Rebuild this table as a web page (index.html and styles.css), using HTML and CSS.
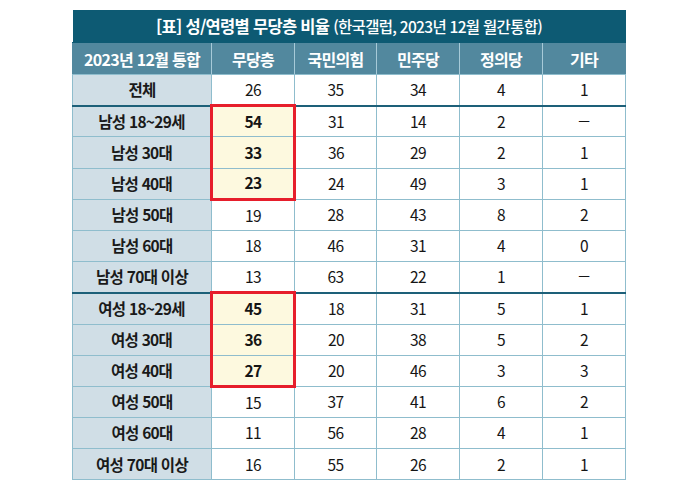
FILE: index.html
```html
<!DOCTYPE html>
<html lang="ko">
<head>
<meta charset="utf-8">
<link rel="stylesheet" href="styles.css">
</head>
<body>
<div class="wrap">
<table class="poll">
  <colgroup>
    <col class="c1"><col class="cn"><col class="cn2"><col class="cn"><col class="cn"><col class="cn">
  </colgroup>
  <thead>
    <tr class="title"><th colspan="6"><b>[표] 성/연령별 무당층 비율</b> <span>(한국갤럽, 2023년 12월 월간통합)</span></th></tr>
    <tr class="head"><th>2023년 12월 통합</th><th>무당층</th><th>국민의힘</th><th>민주당</th><th>정의당</th><th>기타</th></tr>
  </thead>
  <tbody>
    <tr class="sep"><th>전체</th><td>26</td><td>35</td><td>34</td><td>4</td><td>1</td></tr>
    <tr><th>남성 18~29세</th><td class="hl top">54</td><td>31</td><td>14</td><td>2</td><td><span class="dash">—</span></td></tr>
    <tr><th>남성 30대</th><td class="hl">33</td><td>36</td><td>29</td><td>2</td><td>1</td></tr>
    <tr><th>남성 40대</th><td class="hl bot">23</td><td>24</td><td>49</td><td>3</td><td>1</td></tr>
    <tr><th>남성 50대</th><td>19</td><td>28</td><td>43</td><td>8</td><td>2</td></tr>
    <tr><th>남성 60대</th><td>18</td><td>46</td><td>31</td><td>4</td><td>0</td></tr>
    <tr class="sep"><th>남성 70대 이상</th><td>13</td><td>63</td><td>22</td><td>1</td><td><span class="dash">—</span></td></tr>
    <tr><th>여성 18~29세</th><td class="hl top">45</td><td>18</td><td>31</td><td>5</td><td>1</td></tr>
    <tr><th>여성 30대</th><td class="hl">36</td><td>20</td><td>38</td><td>5</td><td>2</td></tr>
    <tr><th>여성 40대</th><td class="hl bot">27</td><td>20</td><td>46</td><td>3</td><td>3</td></tr>
    <tr><th>여성 50대</th><td>15</td><td>37</td><td>41</td><td>6</td><td>2</td></tr>
    <tr><th>여성 60대</th><td>11</td><td>56</td><td>28</td><td>4</td><td>1</td></tr>
    <tr><th>여성 70대 이상</th><td>16</td><td>55</td><td>26</td><td>2</td><td>1</td></tr>
  </tbody>
</table>
</div>
</body>
</html>
```

FILE: styles.css
```css
html, body {
  margin: 0;
  padding: 0;
  background: #ffffff;
}
.wrap {
  padding: 10px 0 0 72px;
}
.poll {
  border-collapse: collapse;
  table-layout: fixed;
  width: 553px;
  font-family: "Noto Sans CJK KR", "Noto Sans", sans-serif;
  color: #151515;
  letter-spacing: -0.7px;
}
.c1 { width: 139px; }
.cn { width: 83px; }
.cn2 { width: 82px; }
.poll th, .poll td {
  padding: 0;
  text-align: center;
  vertical-align: middle;
  border: 1px solid #8fbdcd;
  font-size: 15.5px;
  line-height: 1;
}
.title th {
  height: 32px;
  background: #0d5a73;
  color: #ffffff;
  font-size: 16.5px;
  border: 0;
  border-bottom: 1px solid #0d5a73;
}
.title b { font-weight: 700; }
.title span { font-weight: 500; font-size: 15.5px; }
.head th {
  height: 31px;
  background: #52889e;
  color: #ffffff;
  font-size: 16px;
  font-weight: 700;
  border-color: #a7cad8;
  border-top: 0;
  border-bottom: 1px solid #8fbdcd;
}
.head th:first-child { border-left: 1px solid #52889e; }
.head th:last-child { border-right: 1px solid #52889e; }
tbody tr { height: 31.2px; }
tbody th {
  background: #d0dee6;
  font-weight: 700;
  color: #1a1a1a;
}
tbody td {
  background: #ffffff;
  font-weight: 400;
}
.dash {
  display: inline-block;
  font-size: 13px;
  letter-spacing: 0;
  font-weight: 500;
  transform: translateY(-3px);
}
tbody tr.sep th, tbody tr.sep td {
  border-bottom: 2px solid #1d6079;
}
.poll td.hl {
  background: #fdf9df;
  font-weight: 700;
  border-left: 3px solid #e61e2b;
  border-right: 3px solid #e61e2b;
}
.poll td.hl.top { border-top: 3px solid #e61e2b; }
.poll td.hl.bot { border-bottom: 3px solid #e61e2b; }
```
